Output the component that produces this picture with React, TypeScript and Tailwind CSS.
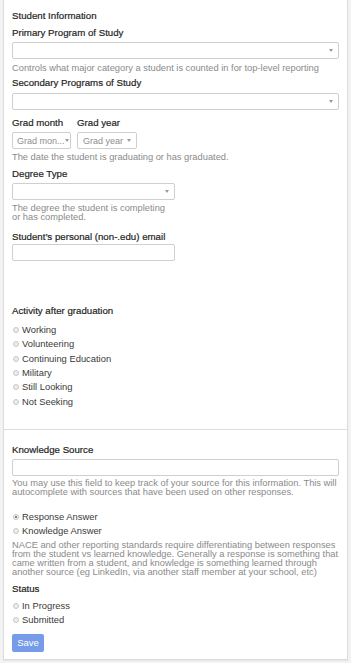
import React from 'react';

const Caret = () => (
  <span className="ml-auto h-0 w-0 shrink-0 border-l-[2.5px] border-r-[2.5px] border-t-[3px] border-l-transparent border-r-transparent border-t-[#9a9a9a]" />
);

function Select({ className = '', placeholder }: { className?: string; placeholder?: string }) {
  return (
    <div className={`flex h-[17px] items-center rounded-[2px] border border-[#cfcfcf] bg-white pl-[4px] pr-[5px] ${className}`}>
      {placeholder && <span className="whitespace-nowrap text-[9px] leading-[10px] text-[#8e8e8e]">{placeholder}</span>}
      <Caret />
    </div>
  );
}

function Label({ children, className = '' }: { children: React.ReactNode; className?: string }) {
  return (
    <div className={`whitespace-nowrap text-[9.7px] leading-[12px] text-[#1f1f1f] ${className}`} style={{ WebkitTextStroke: '0.2px #1f1f1f' }}>
      {children}
    </div>
  );
}

function Help({ children, className = '' }: { children: React.ReactNode; className?: string }) {
  return <div className={`whitespace-nowrap text-[9.3px] leading-[9px] text-[#8a8a8a] ${className}`}>{children}</div>;
}

function Radio({ label, checked = false }: { label: string; checked?: boolean }) {
  return (
    <div className="flex h-[14.3px] items-center">
      <span className="ml-[1px] flex h-[6px] w-[6px] items-center justify-center rounded-full border border-[#c8c8c8] bg-[#ececec]">
        {checked && <span className="h-[2px] w-[2px] rounded-full bg-[#666]" />}
      </span>
      <span className="ml-[3px] text-[9.4px] leading-[12px] text-[#3a3a3a]">{label}</span>
    </div>
  );
}

export default function App() {
  return (
    <div className="min-h-[663px] bg-[#f3f3f3] px-[3px]" style={{ fontFamily: '"Liberation Sans", Arial, sans-serif' }}>
      <div className="border-x border-b border-[#dcdcdc] bg-white shadow-[0_1px_1px_rgba(0,0,0,0.05)]">
        <div className="px-[8px] pt-[10px] pb-[20px]">
          <Label>Student Information</Label>
          <Label className="mt-[5px]">Primary Program of Study</Label>
          <Select className="mt-[3px]" />
          <Help className="mt-[5px]">Controls what major category a student is counted in for top-level reporting</Help>
          <Label className="mt-[4px]">Secondary Programs of Study</Label>
          <Select className="mt-[4px]" />
          <div className="mt-[7px] flex gap-[6px]">
            <div className="w-[59px]">
              <Label>Grad month</Label>
              <Select className="mt-[3px]" placeholder="Grad mon..." />
            </div>
            <div className="w-[60px]">
              <Label>Grad year</Label>
              <Select className="mt-[3px] pl-[5px]" placeholder="Grad year" />
            </div>
          </div>
          <Help className="mt-[4px]">The date the student is graduating or has graduated.</Help>
          <Label className="mt-[6px]">Degree Type</Label>
          <Select className="mt-[3px] w-[163px]" />
          <Help className="mt-[4px]">
            The degree the student is completing
            <br />
            or has completed.
          </Help>
          <Label className="mt-[9px]">Student’s personal (non-.edu) email</Label>
          <div className="mt-[1px] h-[17px] w-[163px] rounded-[2px] border border-[#cfcfcf]" />
          <Label className="mt-[44px]">Activity after graduation</Label>
          <div className="mt-[6px]">
            <Radio label="Working" />
            <Radio label="Volunteering" />
            <Radio label="Continuing Education" />
            <Radio label="Military" />
            <Radio label="Still Looking" />
            <Radio label="Not Seeking" />
          </div>
        </div>
        <div className="border-t border-[#dedede] px-[8px] pt-[14px] pb-[7px]">
          <Label>Knowledge Source</Label>
          <div className="mt-[3px] h-[17px] rounded-[2px] border border-[#cfcfcf]" />
          <Help className="mt-[3px]">
            You may use this field to keep track of your source for this information. This will
            <br />
            autocomplete with sources that have been used on other responses.
          </Help>
          <div className="mt-[13px]">
            <Radio label="Response Answer" checked />
            <Radio label="Knowledge Answer" />
          </div>
          <Help className="mt-[3px]">
            NACE and other reporting standards require differentiating between responses
            <br />
            from the student vs learned knowledge. Generally a response is something that
            <br />
            came written from a student, and knowledge is something learned through
            <br />
            another source (eg LinkedIn, via another staff member at your school, etc)
          </Help>
          <Label className="mt-[6px]">Status</Label>
          <div className="mt-[3px]">
            <Radio label="In Progress" />
            <Radio label="Submitted" />
          </div>
          <button className="mt-[7px] block h-[18px] w-[32px] rounded-[2px] bg-[#759be9] text-[9.5px] leading-[18px] text-white">
            Save
          </button>
        </div>
      </div>
    </div>
  );
}
